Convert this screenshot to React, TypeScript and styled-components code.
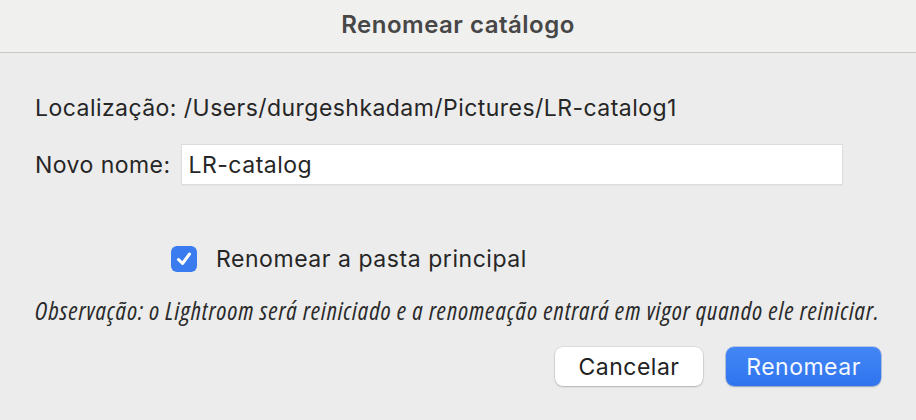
import styled, { createGlobalStyle } from "styled-components";

const GlobalStyle = createGlobalStyle`
  html, body {
    margin: 0;
    padding: 0;
    background: #ececec;
  }
  * {
    box-sizing: border-box;
  }
`;

const Dialog = styled.div`
  width: 916px;
  height: 420px;
  background: #ececec;
  display: flex;
  flex-direction: column;
  font-family: Inter, "Liberation Sans", sans-serif;
  color: #262626;
  overflow: hidden;
`;

const TitleBar = styled.div`
  height: 53px;
  background: #f0f0ef;
  border-bottom: 1px solid #c9c9c9;
  display: flex;
  align-items: center;
  justify-content: center;
  padding-bottom: 4px;
`;

const Title = styled.div`
  font-family: Inter, "Liberation Sans", sans-serif;
  font-size: 24px;
  font-weight: 600;
  color: #474747;
  letter-spacing: 0.5px;
`;

const Body = styled.div`
  display: flex;
  flex-direction: column;
  padding: 40px 35px 0 35px;
`;

const Row = styled.div`
  display: flex;
  align-items: center;
  height: 30px;
  font-size: 23px;
  letter-spacing: 0.45px;
  white-space: pre;
`;

const Label = styled.span`
  margin-right: 12px;
`;

const NameRow = styled(Row)`
  margin-top: 22px;
  height: 39px;
`;

const Input = styled.input`
  width: 660px;
  height: 39px;
  border: none;
  background: #fff;
  box-shadow: 0 0 0 1px #dcdcdc, 0 1px 1px rgba(0, 0, 0, 0.15);
  font-family: Inter, "Liberation Sans", sans-serif;
  font-size: 23px;
  letter-spacing: 0.5px;
  color: #262626;
  padding: 0 6px;
  outline: none;
`;

const CheckRow = styled.label`
  display: flex;
  align-items: center;
  height: 28px;
  margin: 61px 0 0 136px;
  font-size: 23px;
  letter-spacing: 0.55px;
  gap: 19px;
`;

const Check = styled.span`
  width: 26px;
  height: 26px;
  border-radius: 6px;
  background: #3a7cf0;
  display: flex;
  align-items: center;
  justify-content: center;
`;

const Note = styled.div`
  margin-top: 23px;
  height: 28px;
  line-height: 28px;
  font-family: "Open Sans", sans-serif;
  font-stretch: condensed;
  font-style: italic;
  font-size: 25px;
  letter-spacing: 0.95px;
  color: #2a2a2a;
  white-space: nowrap;
`;

const Buttons = styled.div`
  display: flex;
  justify-content: flex-end;
  gap: 23px;
  margin-top: 23px;
`;

const Button = styled.div<{ primary?: boolean }>`
  height: 39px;
  padding: 0 ${(p) => (p.primary ? "20px" : "23px")};
  min-width: ${(p) => (p.primary ? "155px" : "148px")};
  border-radius: 8px;
  display: flex;
  align-items: center;
  justify-content: center;
  font-size: 23px;
  letter-spacing: 0.5px;
  color: ${(p) => (p.primary ? "#f4f8ff" : "#222")};
  background: ${(p) =>
    p.primary ? "linear-gradient(#4387f6, #2f74ee)" : "#ffffff"};
  box-shadow: ${(p) =>
    p.primary
      ? "0 0 0 0.5px rgba(30, 90, 200, 0.5), 0 1px 2px rgba(0, 0, 0, 0.2)"
      : "0 0 0 0.5px rgba(0, 0, 0, 0.12), 0 1px 2px rgba(0, 0, 0, 0.2)"};
`;

export default function App() {
  return (
    <Dialog>
      <GlobalStyle />
      <TitleBar>
        <Title>Renomear catálogo</Title>
      </TitleBar>
      <Body>
        <Row>Localização: /Users/durgeshkadam/Pictures/LR-catalog1</Row>
        <NameRow>
          <Label>Novo nome:</Label>
          <Input defaultValue="LR-catalog" />
        </NameRow>
        <CheckRow>
          <Check>
            <svg width="20" height="20" viewBox="0 0 20 20">
              <polyline
                points="4.5 10.5 8.5 14.5 15.5 5"
                fill="none"
                stroke="#fff"
                strokeWidth="3"
                strokeLinecap="round"
                strokeLinejoin="round"
              />
            </svg>
          </Check>
          Renomear a pasta principal
        </CheckRow>
        <Note>
          Observação: o Lightroom será reiniciado e a renomeação entrará em
          vigor quando ele reiniciar.
        </Note>
        <Buttons>
          <Button>Cancelar</Button>
          <Button primary>Renomear</Button>
        </Buttons>
      </Body>
    </Dialog>
  );
}
